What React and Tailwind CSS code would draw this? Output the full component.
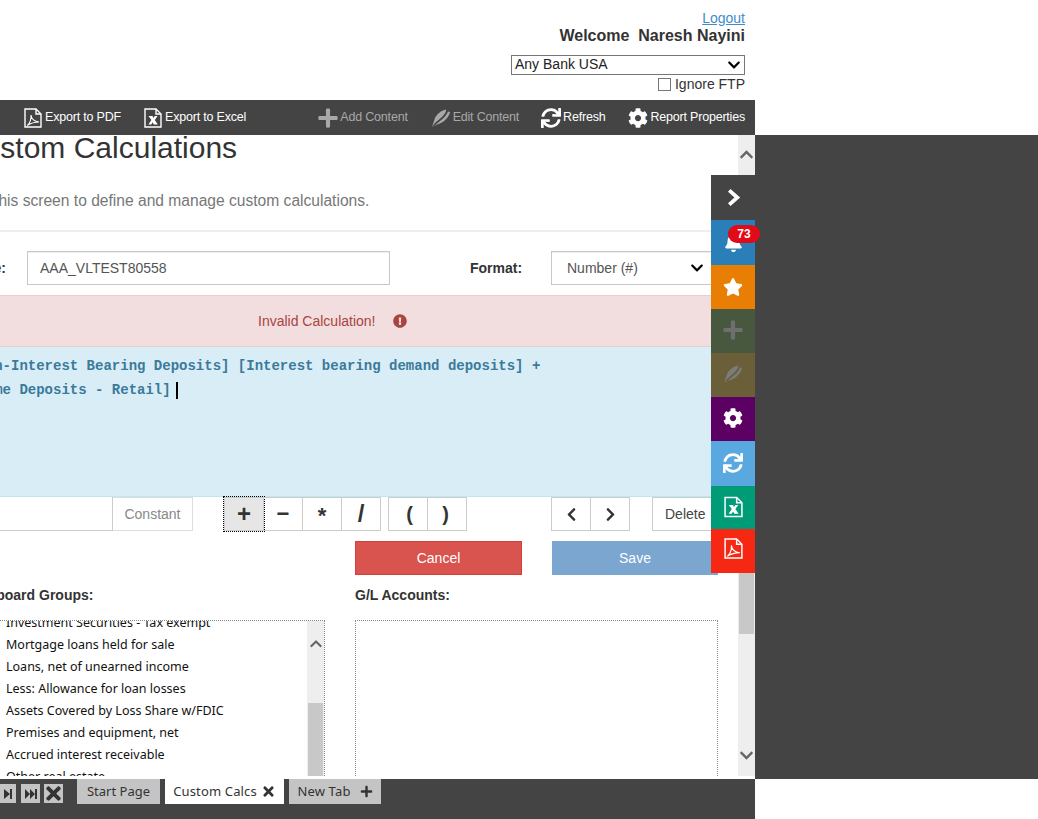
import { FaPlus, FaSync, FaCog, FaChevronUp, FaChevronDown, FaChevronLeft, FaChevronRight, FaBell, FaStar, FaExclamationCircle, FaTimes } from 'react-icons/fa';

const sans = 'font-["Liberation_Sans",Arial,sans-serif]';
const tahoma = 'font-["Noto_Sans",sans-serif]';

const PdfIcon = ({ className }) => (
  <svg viewBox="0 0 18 20" fill="none" stroke="currentColor" strokeWidth="1.4" className={className}>
    <path d="M1 1h11l5 5v13H1z" />
    <path d="M12 1v5h5" />
    <path d="M3 17.5c2.5-1.5 4.5-6 4-10.5 .5 4 3 6.5 8 7-4 0-8 1-12 3.5z" strokeWidth="1.1" />
  </svg>
);

const ExcelIcon = ({ className }) => (
  <svg viewBox="0 0 18 20" fill="none" stroke="currentColor" strokeWidth="1.4" className={className}>
    <path d="M1 1h11l5 5v13H1z" />
    <path d="M12 1v5h5" />
    <path d="M4.5 8h4l1 2 1.2-2h2.8l-2.7 4 3 4.5h-4l-1.2-2.2-1.3 2.2H4.4l3-4.5z" fill="currentColor" stroke="none" />
  </svg>
);

const NibIcon = ({ className }) => (
  <svg viewBox="0 0 20 20" fill="currentColor" className={className}>
    <path d="M1 19 4 10C6 6 10 2.500 15 1.500 15.500 3 14 6 11 9L4 15z" />
    <path d="M2.500 18.500 12 10.500C14.500 8 16.500 5.500 17 3.500L19 4C18 9 13 15 6 16.500z" />
  </svg>
);

const BoldChevron = ({ className }) => (
  <svg viewBox="0 0 14 20" fill="none" stroke="currentColor" strokeWidth="4" className={className}>
    <path d="M2 2.500 10.500 10 2 17.500" />
  </svg>
);

const ToolItem = ({ icon: Icon, label, muted, size = 'text-[20px]', className = '' }) => (
  <div className={`flex items-center gap-[2px] text-[12.5px] tracking-[-0.2px] ${muted ? 'text-[#a8a8a8]' : 'text-white'} ${className}`}>
    <Icon className={size} />
    <span>{label}</span>
  </div>
);

const OpButton = ({ children, className = '' }) => (
  <div className={`flex h-[34px] w-[40px] items-center justify-center border border-[#ccc] text-[#333] ${className}`}>{children}</div>
);

const sideItems = [
  { bg: 'bg-[#444444]', h: 'h-[45px]', icon: BoldChevron, cls: 'ml-[2px] -mt-[1px] text-white h-[19px] w-[14px]' },
  { bg: 'bg-[#2a7fb8]', h: 'h-[45px]', icon: FaBell, cls: 'text-white text-[19px]', badge: '73' },
  { bg: 'bg-[#e87e04]', h: 'h-[44px]', icon: FaStar, cls: 'text-white text-[20px]' },
  { bg: 'bg-[#47583f]', h: 'h-[44px]', icon: FaPlus, cls: '-mt-[2px] text-[#6f6f6f] text-[22px]' },
  { bg: 'bg-[#6b5f3a]', h: 'h-[44px]', icon: NibIcon, cls: '-mt-[2px] text-[#7b7b7b] h-[20px] w-[20px]' },
  { bg: 'bg-[#5c0063]', h: 'h-[44px]', icon: FaCog, cls: '-mt-[2px] text-white text-[20px]' },
  { bg: 'bg-[#59a9e0]', h: 'h-[45px]', icon: FaSync, cls: '-mt-[2px] text-white text-[20px]' },
  { bg: 'bg-[#009b77]', h: 'h-[43px]', icon: ExcelIcon, cls: '-mt-[2px] text-white h-[22px] w-[19px]' },
  { bg: 'bg-[#f62813]', h: 'h-[44px]', icon: PdfIcon, cls: '-mt-[6px] text-white h-[21px] w-[19px]' },
];

const groups = [
  'Investment Securities - Tax exempt',
  'Mortgage loans held for sale',
  'Loans, net of unearned income',
  'Less: Allowance for loan losses',
  'Assets Covered by Loss Share w/FDIC',
  'Premises and equipment, net',
  'Accrued interest receivable',
  'Other real estate',
];

export default function App() {
  return (
    <div className={`flex h-[819px] w-[1038px] flex-col overflow-hidden bg-white text-[#333] ${sans}`}>
      {/* top header */}
      <div className="flex h-[100px] w-[755px] flex-col items-end pr-[10px] pt-[10px]">
        <a className="text-[14px] leading-[16px] text-[#428bca] underline">Logout</a>
        <div className="mt-[1px] text-[16px] font-bold leading-[18px] whitespace-pre">Welcome  Naresh Nayini</div>
        <div className="relative mt-[10px] flex h-[20px] w-[234px] items-center border border-[#767676] bg-white pb-[2px] pl-[3px] text-[14px] text-[#222]">
          Any Bank USA
          <FaChevronDown className="absolute right-[3px] top-[2px] text-[14px] text-black" />
        </div>
        <label className="mt-[1px] flex items-center text-[14px] leading-[17px] text-[#333]">
          <input type="checkbox" className="mr-[4px] h-[13px] w-[13px] appearance-none border border-[#767676] bg-white" />
          Ignore FTP
        </label>
      </div>

      {/* toolbar */}
      <div className="flex h-[35px] w-[755px] shrink-0 items-center bg-[#444444] pl-[24px] pr-[10px]">
        <ToolItem icon={PdfIcon} label="Export to PDF" size="h-[20px] w-[18px] mr-px" className="w-[120px]" />
        <ToolItem icon={ExcelIcon} label="Export to Excel" size="h-[20px] w-[18px] mr-px" />
        <div className="flex-1" />
        <ToolItem icon={FaPlus} label="Add Content" muted size="text-[22px] -mr-px" className="mr-[23px]" />
        <ToolItem icon={NibIcon} label="Edit Content" muted size="h-[20px] w-[20px]" className="mr-[22px]" />
        <ToolItem icon={FaSync} label="Refresh" className="mr-[23px]" />
        <ToolItem icon={FaCog} label="Report Properties" />
      </div>

      {/* middle */}
      <div className="flex h-[644px] shrink-0">
        <div className="relative flex w-[755px] shrink-0">
          <div className="w-[738px] shrink-0 pb-[3px]">
            <div className="h-[641px] overflow-hidden">
              <div className="ml-[-46px] w-[784px]">
                <h1 className="ml-[8px] h-[30px] whitespace-nowrap text-[30px] leading-[26px] text-[#333]">Custom Calculations</h1>
                <p className="ml-[8px] mt-[27px] h-[18px] whitespace-nowrap text-[15.6px] leading-[18px] text-[#777]">Use this screen to define and manage custom calculations.</p>
                <div className="mt-[20px] h-[2px] bg-[#eeeeee]" />

                <div className="mt-[19px] flex h-[34px] items-center">
                  <span className="w-[52px] text-right text-[14px] font-bold whitespace-nowrap">Name:</span>
                  <div className="ml-[21px] flex h-[34px] w-[363px] items-center border border-[#c8c8c8] pl-[12px] text-[14px] text-[#555] shadow-[inset_0_1px_1px_rgba(0,0,0,0.075)]">AAA_VLTEST80558</div>
                  <span className="ml-[80px] w-[81px] text-[14px] font-bold">Format:</span>
                  <div className="relative flex h-[34px] w-[167px] items-center border border-[#c8c8c8] pl-[15px] text-[14px] text-[#555] shadow-[inset_0_1px_1px_rgba(0,0,0,0.075)]">
                    Number (#)
                    <FaChevronDown className="absolute left-[138px] top-[9px] text-[14px] text-black" />
                  </div>
                </div>

                <div className="mt-[10px] flex h-[52px] items-center border-y border-[#ebccd1] bg-[#f2dede] pl-[304px] text-[14px] text-[#a94442]">
                  Invalid Calculation!
                  <FaExclamationCircle className="ml-[17px] text-[14px]" />
                </div>

                <div className="h-[150px] border-b border-[#bce8f1] bg-[#d9edf7] pl-[15px] pt-[7px] font-['Liberation_Mono',monospace] text-[14px] font-bold leading-[24px] whitespace-pre text-[#3a7a9a]">
                  <div>[Non-Interest Bearing Deposits] [Interest bearing demand deposits] +</div>
                  <div className="flex items-center">[Time Deposits - Retail]<span className="ml-[5px] inline-block h-[17px] w-[2px] bg-black" /></div>
                </div>

                <div className="flex h-[34px] text-[14px]">
                  <div className="ml-[15px] h-[34px] w-[144px] border-b border-r border-[#ccc]" />
                  <div className="flex h-[34px] w-[80px] items-center justify-center border border-l-0 border-[#ddd] text-[#888]">Constant</div>
                  <OpButton className="ml-[31px] bg-[#e6e6e6] outline-1 outline-dotted outline-black"><span className="text-[24px] font-bold leading-none">+</span></OpButton>
                  <OpButton className="-ml-px"><span className="text-[22px] font-bold leading-none">−</span></OpButton>
                  <OpButton className="-ml-px"><span className="mt-[4px] text-[22px] font-bold leading-none">*</span></OpButton>
                  <OpButton className="-ml-px"><span className="text-[24px] font-bold leading-none">/</span></OpButton>
                  <OpButton className="ml-[7px] pl-[3px]"><span className="text-[20px] font-bold leading-none">(</span></OpButton>
                  <OpButton className="-ml-px pr-[3px]"><span className="text-[20px] font-bold leading-none">)</span></OpButton>
                  <OpButton className="ml-[84px]"><FaChevronLeft className="text-[15px]" /></OpButton>
                  <OpButton className="-ml-px"><FaChevronRight className="text-[15px]" /></OpButton>
                  <div className="ml-[22px] flex h-[34px] w-[66px] items-center border border-[#ccc] pl-[12px] text-[#444]">Delete</div>
                </div>

                <div className="mt-[10px] flex h-[34px] text-[14px] text-white">
                  <div className="ml-[401px] flex h-[34px] w-[167px] items-center justify-center border border-[#d43f3a] bg-[#d9534f]">Cancel</div>
                  <div className="ml-[30px] flex h-[34px] w-[166px] items-center justify-center bg-[#7aa6d0]">Save</div>
                </div>

                <div className="mt-[12px] flex h-[16px] text-[14px] font-bold leading-[16px]">
                  <span className="ml-[8px] w-[393px] whitespace-nowrap">Dashboard Groups:</span>
                  <span className="whitespace-nowrap">G/L Accounts:</span>
                </div>

                <div className="mt-[17px] flex">
                  <div className={`ml-[15px] flex h-[200px] w-[356px] border border-dotted border-[#888] text-[12.5px] text-[#111] ${tahoma}`}>
                    <div className="h-full flex-1 overflow-hidden pl-[36px]">
                      <div className="-mt-[9px]">
                        {groups.map((g) => (
                          <div key={g} className="h-[22px] leading-[22px] whitespace-nowrap">{g}</div>
                        ))}
                      </div>
                    </div>
                    <div className="flex h-full w-[17px] flex-col items-center bg-[#eeeeee]">
                      <FaChevronUp className="mt-[16px] text-[14px] text-[#666]" />
                      <div className="mt-[53px] h-[120px] w-[15px] bg-[#c8c8c8]" />
                    </div>
                  </div>
                  <div className="ml-[30px] h-[200px] w-[363px] border border-dotted border-[#888]" />
                </div>
              </div>
            </div>
          </div>

          {/* page scrollbar */}
          <div className="mb-[3px] flex w-[17px] flex-col items-center bg-[#eeeeee]">
            <FaChevronUp className="mt-[12px] text-[15px] text-[#666]" />
            <div className="mt-[249px] h-[223px] w-[15px] bg-[#c8c8c8]" />
            <div className="flex-1" />
            <FaChevronDown className="mb-[13px] text-[15px] text-[#666]" />
          </div>

          {/* floating side menu */}
          <div className="absolute left-[711px] top-[40px] flex w-[44px] flex-col">
            {sideItems.map((item, i) => (
              <div key={i} className={`relative flex items-center justify-center ${item.bg} ${item.h}`}>
                <item.icon className={item.cls} />
                {item.badge && (
                  <span className="absolute left-[17px] top-[5px] flex h-[18px] w-[32px] items-center justify-center rounded-[9px] bg-[#e30a17] text-[12px] font-bold text-white">{item.badge}</span>
                )}
              </div>
            ))}
          </div>
        </div>
        <div className="flex-1 bg-[#444444]" />
      </div>

      {/* bottom tabs */}
      <div className={`flex h-[40px] w-[755px] shrink-0 items-start bg-[#444444] text-[13px] ${tahoma}`}>
        <div className="mt-[5px] flex h-[19px] w-[16px] items-center justify-center bg-[#c4c4c4]">
          <svg width="8" height="10" viewBox="0 0 8 10" className="fill-[#333]"><path d="M0 0l6 5-6 5zM6 0h2v10H6z" /></svg>
        </div>
        <div className="ml-[5px] mt-[5px] flex h-[19px] w-[19px] items-center justify-center bg-[#c4c4c4]">
          <svg width="12" height="10" viewBox="0 0 12 10" className="fill-[#333]"><path d="M0 0l5 5-5 5zM5 0l5 5-5 5zM10 0h2v10h-2z" /></svg>
        </div>
        <div className="ml-[4px] mt-[5px] flex h-[19px] w-[19px] items-center justify-center bg-[#c4c4c4]">
          <FaTimes className="text-[21px] text-[#333]" />
        </div>
        <div className="ml-[14px] flex h-[25px] w-[83px] items-center justify-center bg-[#c4c4c4] text-[#333]">Start Page</div>
        <div className="ml-[5px] flex h-[25px] w-[119px] items-center justify-center gap-[4px] bg-white tracking-[0.15px] text-[#333]">
          Custom Calcs <FaTimes className="text-[15px]" />
        </div>
        <div className="ml-[5px] flex h-[25px] w-[92px] items-center justify-center gap-[9px] bg-[#c4c4c4] tracking-[0.15px] text-[#333]">
          New Tab <FaPlus className="text-[13px]" />
        </div>
      </div>
    </div>
  );
}
